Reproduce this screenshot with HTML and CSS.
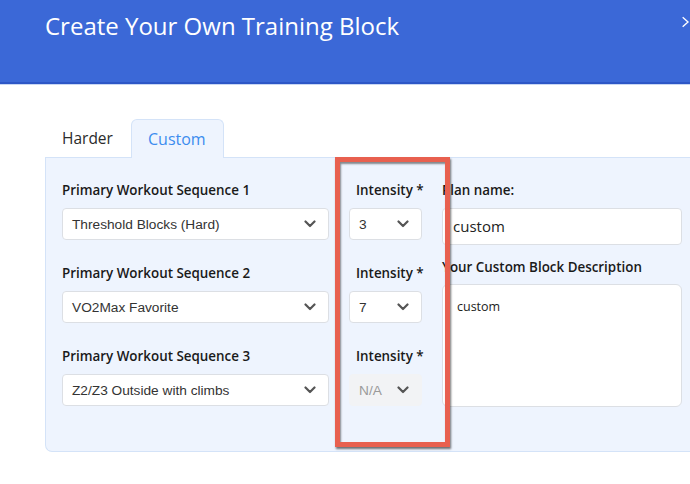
FILE: index.html
```
<!DOCTYPE html>
<html>
<head>
<meta charset="utf-8">
<link rel="stylesheet" href="styles.css">
</head>
<body>
<div class="modal">
  <header class="modal-head">
    <h1 class="modal-title">Create Your Own Training Block</h1>
    <span class="close">
      <svg width="12" height="16" viewBox="0 0 12 16"><path d="M1 1 L9 8 L1 15" fill="none" stroke="#fff" stroke-width="2"/></svg>
    </span>
  </header>
  <div class="modal-body">
    <nav class="tabs">
      <div class="tab">Harder</div>
      <div class="tab active">Custom</div>
    </nav>
    <section class="panel">
      <div class="col-seq">
        <div class="field">
          <label class="label">Primary Workout Sequence 1</label>
          <div class="select">Threshold Blocks (Hard)<svg class="chev" viewBox="0 0 12 8"><path d="M1.5 1.5 L6 6 L10.5 1.5" /></svg></div>
        </div>
        <div class="field">
          <label class="label">Primary Workout Sequence 2</label>
          <div class="select">VO2Max Favorite<svg class="chev" viewBox="0 0 12 8"><path d="M1.5 1.5 L6 6 L10.5 1.5" /></svg></div>
        </div>
        <div class="field">
          <label class="label">Primary Workout Sequence 3</label>
          <div class="select">Z2/Z3 Outside with climbs<svg class="chev" viewBox="0 0 12 8"><path d="M1.5 1.5 L6 6 L10.5 1.5" /></svg></div>
        </div>
      </div>
      <div class="col-int">
        <div class="field">
          <label class="label label-int">Intensity *</label>
          <div class="select small">3<svg class="chev" viewBox="0 0 12 8"><path d="M1.5 1.5 L6 6 L10.5 1.5" /></svg></div>
        </div>
        <div class="field">
          <label class="label label-int">Intensity *</label>
          <div class="select small">7<svg class="chev" viewBox="0 0 12 8"><path d="M1.5 1.5 L6 6 L10.5 1.5" /></svg></div>
        </div>
        <div class="field">
          <label class="label label-int">Intensity *</label>
          <div class="select small disabled">N/A<svg class="chev" viewBox="0 0 12 8"><path d="M1.5 1.5 L6 6 L10.5 1.5" /></svg></div>
        </div>
      </div>
      <div class="col-plan">
        <label class="label">Plan name:</label>
        <div class="input">custom</div>
        <label class="label label-desc">Your Custom Block Description</label>
        <div class="textarea">custom</div>
      </div>
    </section>
  </div>
  <div class="highlight"></div>
</div>
</body>
</html>
```
FILE: styles.css
```
* { box-sizing: border-box; }
html, body {
  margin: 0;
  padding: 0;
  width: 690px;
  height: 484px;
  overflow: hidden;
  background: #fff;
  font-family: "Open Sans", "DejaVu Sans", sans-serif;
}
.modal {
  position: relative;
  width: 690px;
  height: 484px;
}
.modal-head {
  height: 84px;
  background: #3b68d7;
  border-bottom: 2px solid #2d57c6;
  box-shadow: 0 1px 0 #c9d7f3;
  display: flex;
  align-items: flex-start;
  justify-content: space-between;
  padding-left: 45px;
}
.modal-title {
  margin: 9px 0 0 0;
  font-weight: 400;
  font-size: 24px;
  line-height: 34px;
  color: #fff;
}
.close {
  margin-top: 14px;
  width: 8px;
  overflow: hidden;
  display: flex;
}
.modal-body {
  padding: 35px 0 0 45px;
}
.tabs {
  display: flex;
  height: 38px;
}
.tab {
  width: 86px;
  padding-left: 17px;
  font-size: 15.5px;
  line-height: 38px;
  color: #2b2b2b;
}
.tab.active {
  width: 93px;
  padding-left: 16px;
  font-size: 16px;
  color: #3c8cef;
  background: #eef4fe;
  border: 1px solid #d4e3f8;
  border-bottom: none;
  border-radius: 6px 6px 0 0;
  line-height: 38px;
  position: relative;
  z-index: 1;
  margin-bottom: -1px;
  height: 39px;
}
.panel {
  display: flex;
  gap: 20px;
  width: 645px;
  height: 295px;
  background: #eef4fe;
  border: 1px solid #d4e3f8;
  border-right: none;
  border-radius: 0 0 0 7px;
  padding: 23px 0 0 16px;
  overflow: hidden;
}
.col-seq { width: 267px; flex: none; }
.col-int { width: 73px; flex: none; }
.col-plan { width: 240px; flex: none; }
.field { margin-bottom: 24px; }
.label {
  display: block;
  font-size: 13.4px;
  font-weight: 600;
  line-height: 18px;
  color: #1a1a1a;
  margin-bottom: 9px;
  white-space: nowrap;
}
.label-int { padding-left: 7px; }
.label-desc { margin-top: 13px; margin-bottom: 8px; padding-left: 0; }
.select {
  height: 32px;
  background: #fff;
  border: 1px solid #dcdfe4;
  border-radius: 4px;
  display: flex;
  align-items: center;
  justify-content: space-between;
  padding: 0 12px 0 9px;
  font-family: "Liberation Sans", Arial, sans-serif;
  font-size: 13.7px;
  color: #333;
}
.select.small { padding: 0 12px 0 9px; }
.select.disabled {
  background: #f2f3f5;
  border-color: #f2f3f5;
  color: #9a9a9a;
}
.chev {
  width: 12px;
  height: 8px;
  fill: none;
  stroke: #555;
  stroke-width: 2.2;
  stroke-linecap: round;
  stroke-linejoin: round;
}
.input {
  height: 37px;
  background: #fff;
  border: 1px solid #dcdfe4;
  border-radius: 4px;
  padding-left: 10px;
  font-size: 15px;
  line-height: 35px;
  color: #222;
}
.textarea {
  height: 123px;
  background: #fff;
  border: 1px solid #dcdfe4;
  border-radius: 6px;
  padding: 13px 0 0 14px;
  font-size: 12.5px;
  color: #222;
}
.highlight {
  position: absolute;
  left: 335px;
  top: 157px;
  width: 115px;
  height: 290px;
  border: 5px solid #e8604f;
  box-shadow: 1px 2px 2px rgba(0,0,0,0.55), inset 1px 2px 2px rgba(0,0,0,0.45);
}
```
